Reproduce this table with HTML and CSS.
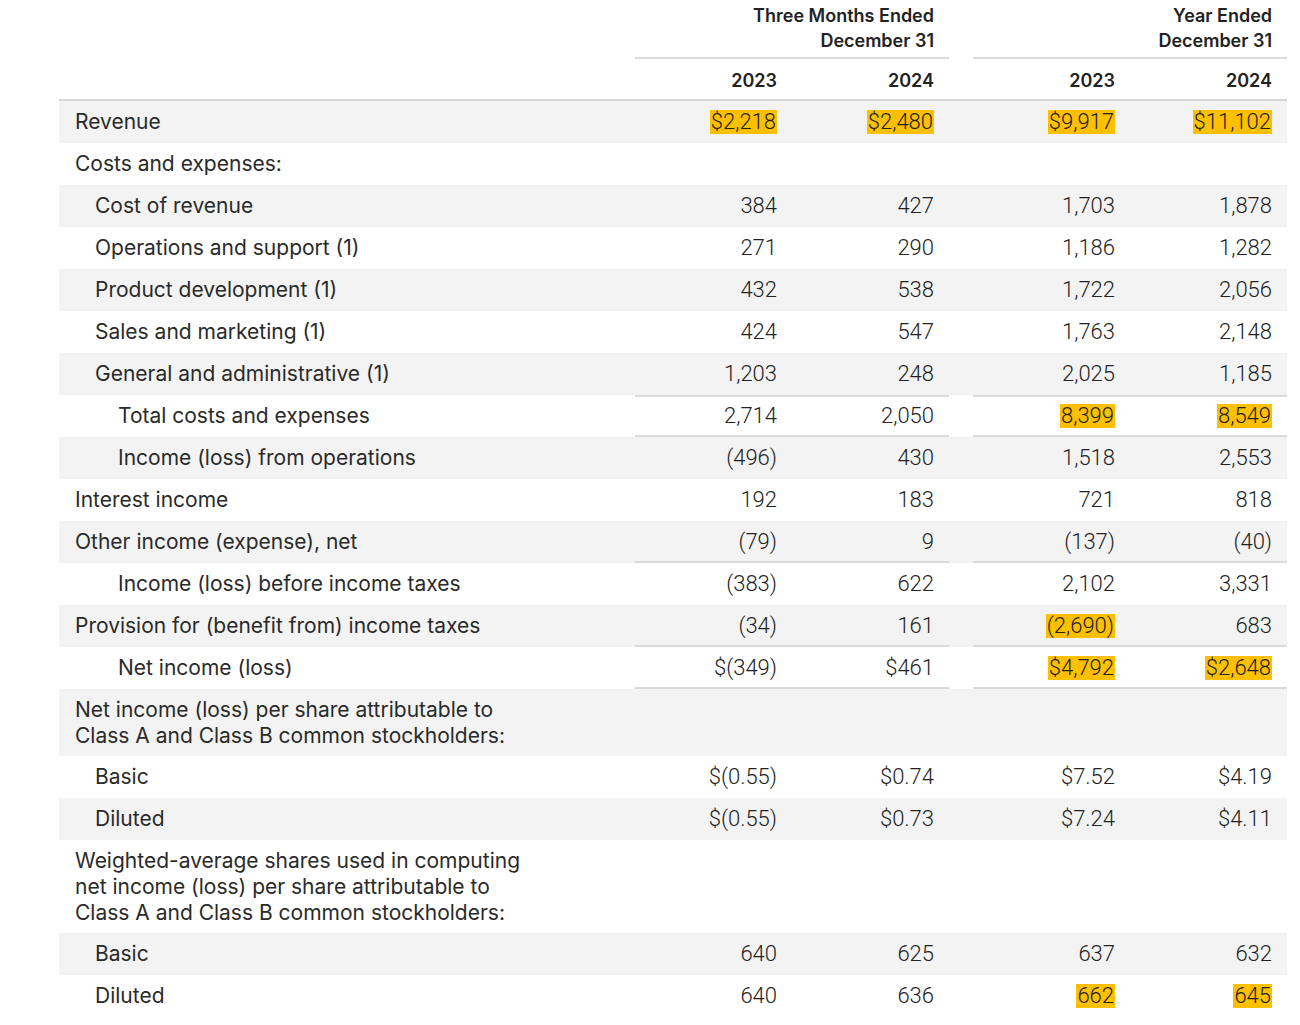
FILE: index.html
```html
<!DOCTYPE html>
<html>
<head>
<meta charset="utf-8">
<link rel="stylesheet" href="styles.css">
</head>
<body>
<div class="wrap">
<table class="fin">
  <colgroup>
    <col class="c-label"><col class="c-num"><col class="c-num"><col class="c-gap"><col class="c-num"><col class="c-num">
  </colgroup>
  <thead>
    <tr class="h1">
      <th></th>
      <th colspan="2" class="grp">Three Months Ended<br>December 31</th>
      <th class="gap"></th>
      <th colspan="2" class="grp">Year Ended<br>December 31</th>
    </tr>
    <tr class="h2">
      <th></th>
      <th class="yr">2023</th><th class="yr">2024</th>
      <th class="gap"></th>
      <th class="yr">2023</th><th class="yr">2024</th>
    </tr>
  </thead>
  <tbody>
    <tr><td class="lbl">Revenue</td><td class="num"><span class="hl">$2,218</span></td><td class="num"><span class="hl">$2,480</span></td><td class="gap"></td><td class="num"><span class="hl">$9,917</span></td><td class="num"><span class="hl">$11,102</span></td></tr>
    <tr><td class="lbl">Costs and expenses:</td><td class="num"></td><td class="num"></td><td class="gap"></td><td class="num"></td><td class="num"></td></tr>
    <tr><td class="lbl in1">Cost of revenue</td><td class="num">384</td><td class="num">427</td><td class="gap"></td><td class="num">1,703</td><td class="num">1,878</td></tr>
    <tr><td class="lbl in1">Operations and support (1)</td><td class="num">271</td><td class="num">290</td><td class="gap"></td><td class="num">1,186</td><td class="num">1,282</td></tr>
    <tr><td class="lbl in1">Product development (1)</td><td class="num">432</td><td class="num">538</td><td class="gap"></td><td class="num">1,722</td><td class="num">2,056</td></tr>
    <tr><td class="lbl in1">Sales and marketing (1)</td><td class="num">424</td><td class="num">547</td><td class="gap"></td><td class="num">1,763</td><td class="num">2,148</td></tr>
    <tr><td class="lbl in1">General and administrative (1)</td><td class="num">1,203</td><td class="num">248</td><td class="gap"></td><td class="num">2,025</td><td class="num">1,185</td></tr>
    <tr class="rule-top rule-bot"><td class="lbl in2">Total costs and expenses</td><td class="num">2,714</td><td class="num">2,050</td><td class="gap"></td><td class="num"><span class="hl">8,399</span></td><td class="num"><span class="hl">8,549</span></td></tr>
    <tr><td class="lbl in2">Income (loss) from operations</td><td class="num">(496)</td><td class="num">430</td><td class="gap"></td><td class="num">1,518</td><td class="num">2,553</td></tr>
    <tr><td class="lbl">Interest income</td><td class="num">192</td><td class="num">183</td><td class="gap"></td><td class="num">721</td><td class="num">818</td></tr>
    <tr class="rule-bot"><td class="lbl">Other income (expense), net</td><td class="num">(79)</td><td class="num">9</td><td class="gap"></td><td class="num">(137)</td><td class="num">(40)</td></tr>
    <tr><td class="lbl in2">Income (loss) before income taxes</td><td class="num">(383)</td><td class="num">622</td><td class="gap"></td><td class="num">2,102</td><td class="num">3,331</td></tr>
    <tr class="rule-bot"><td class="lbl">Provision for (benefit from) income taxes</td><td class="num">(34)</td><td class="num">161</td><td class="gap"></td><td class="num"><span class="hl">(2,690)</span></td><td class="num">683</td></tr>
    <tr class="rule-bot"><td class="lbl in2">Net income (loss)</td><td class="num">$(349)</td><td class="num">$461</td><td class="gap"></td><td class="num"><span class="hl">$4,792</span></td><td class="num"><span class="hl">$2,648</span></td></tr>
    <tr class="multi"><td class="lbl">Net income (loss) per share attributable to<br>Class A and Class B common stockholders:</td><td class="num"></td><td class="num"></td><td class="gap"></td><td class="num"></td><td class="num"></td></tr>
    <tr><td class="lbl in1">Basic</td><td class="num">$(0.55)</td><td class="num">$0.74</td><td class="gap"></td><td class="num">$7.52</td><td class="num">$4.19</td></tr>
    <tr><td class="lbl in1">Diluted</td><td class="num">$(0.55)</td><td class="num">$0.73</td><td class="gap"></td><td class="num">$7.24</td><td class="num">$4.11</td></tr>
    <tr class="multi"><td class="lbl">Weighted-average shares used in computing<br>net income (loss) per share attributable to<br>Class A and Class B common stockholders:</td><td class="num"></td><td class="num"></td><td class="gap"></td><td class="num"></td><td class="num"></td></tr>
    <tr><td class="lbl in1">Basic</td><td class="num">640</td><td class="num">625</td><td class="gap"></td><td class="num">637</td><td class="num">632</td></tr>
    <tr><td class="lbl in1">Diluted</td><td class="num">640</td><td class="num">636</td><td class="gap"></td><td class="num"><span class="hl">662</span></td><td class="num"><span class="hl">645</span></td></tr>
  </tbody>
</table>
</div>
</body>
</html>
```

FILE: styles.css
```css
html, body {
  margin: 0;
  padding: 0;
  background: #ffffff;
}

.wrap {
  padding: 0 13px 0 59px;
}

.fin {
  border-collapse: separate;
  border-spacing: 0;
  width: 1228px;
  table-layout: fixed;
  color: #222222;
}

.c-label { width: 576px; }
.c-num { width: 157px; }
.c-gap { width: 24px; }

.fin th {
  font-family: "Inter", "Noto Sans", sans-serif;
  font-weight: 600;
  font-size: 18px;
  line-height: 25px;
  text-align: right;
  padding: 0 15px 0 0;
  color: #222222;
}

.h1 th {
  height: 59px;
  vertical-align: top;
  padding-top: 3px;
  box-sizing: border-box;
}

.h1 th.grp {
  box-shadow: inset 0 -2px 0 #dcdcdc;
}

.h2 th {
  height: 42px;
  box-sizing: border-box;
  vertical-align: middle;
  box-shadow: inset 0 -2px 0 #d6d6d6;
}

.h1 th.gap, .h2 th.gap { padding: 0; }

.fin td {
  height: 42px;
  box-sizing: border-box;
  padding: 0;
  vertical-align: middle;
}

.fin tbody tr:nth-child(odd) td {
  background: #f3f3f3;
}

.lbl {
  font-family: "Inter", "Noto Sans", sans-serif;
  font-size: 21px;
  font-weight: 400;
  line-height: 26px;
  padding-left: 16px !important;
  color: #2a2a2a;
}

.lbl.in1 { padding-left: 36px !important; }
.lbl.in2 { padding-left: 59px !important; }

.num {
  font-family: "Roboto", "Liberation Sans", sans-serif;
  font-size: 22px;
  font-weight: 300;
  line-height: 26px;
  text-align: right;
  padding-right: 15px !important;
  color: #222222;
}

.multi td.lbl {
  padding-top: 8px !important;
  padding-bottom: 7px !important;
}

.hl {
  background: #fdc000;
  padding: 0 1px;
  display: inline-block;
  line-height: 24px;
}

.rule-top td.num {
  box-shadow: inset 0 2px 0 #dadada;
}

.rule-bot td.num {
  box-shadow: inset 0 -2px 0 #dadada;
}

.rule-top.rule-bot td.num {
  box-shadow: inset 0 2px 0 #dadada, inset 0 -2px 0 #dadada;
}
```
